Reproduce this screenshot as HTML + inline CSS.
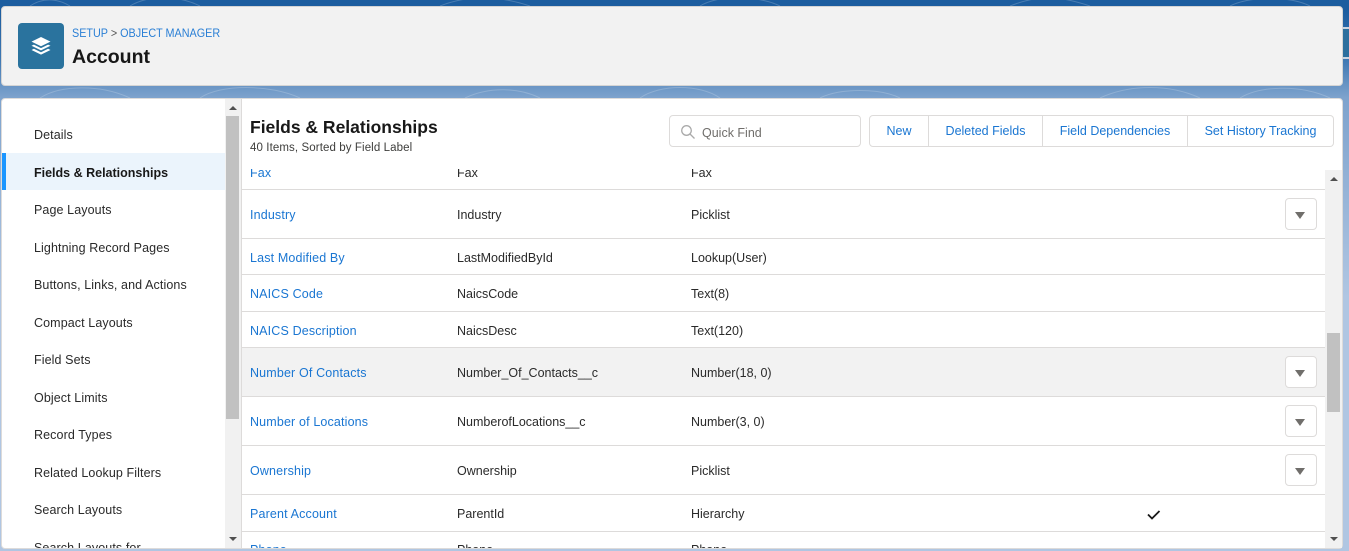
<!DOCTYPE html>
<html><head><meta charset="utf-8">
<style>
html,body{margin:0;padding:0;width:1349px;height:551px;overflow:hidden;background:#b0c6e2;font-family:"Liberation Sans",sans-serif;font-size:12.5px;color:#2a2a2a}
*{box-sizing:border-box}
.a{position:absolute}
.t{position:absolute;white-space:nowrap;line-height:16px;height:16px}
.s .t{margin-top:1px}
.l{color:#1a76d2;letter-spacing:.15px}
.m .t{letter-spacing:.1px}
.hl{position:absolute;left:242px;width:1083px;height:1px;background:#dddbda}
.dd{position:absolute;left:1285px;width:32px;height:32px;background:#fff;border:1px solid #dddbda;border-radius:4px}
.dd:after{content:"";position:absolute;left:9px;top:13px;border-left:5.5px solid transparent;border-right:5.5px solid transparent;border-top:7px solid #706e6b}
.btn{position:absolute;top:115px;height:32px;background:#fff;border:1px solid #dddbda;border-left:none;color:#1a76d2;text-align:center;line-height:31px;white-space:nowrap}
.up,.dn{position:absolute;width:0;height:0;border-left:4px solid transparent;border-right:4px solid transparent}
.up{border-bottom:4px solid #505050}.dn{border-top:4px solid #505050}
</style></head><body>
<div class="a" style="left:0;top:0;width:1349px;height:98px;background:linear-gradient(#1c5d9f 0,#1c5d9f 10px,#3f78b3 60px,#7ea3cd 98px)"></div>
<div class="a" style="left:0;top:98px;width:1349px;height:453px;background:linear-gradient(#7ea3cd,#b0c6e2 200px)"></div>
<svg class="a" style="left:0;top:0" width="1349" height="98" fill="none" stroke="#fff" stroke-opacity=".2">
<path d="M30 6C45-4 60 0 70 6M130 6C150-6 180-4 200 6M440 6C470-6 500-4 530 6M700 6C720-6 760-4 780 6M1010 6C1040-6 1060-4 1090 6M1230 6C1250-4 1290-4 1310 6"/>
<path d="M40 98C60 85 100 84 130 98M200 98C220 84 270 84 300 98M465 98C490 86 520 88 540 98M640 98C660 84 700 84 720 98M820 98C840 88 880 88 900 98M1100 98C1130 84 1170 84 1200 98M1240 98C1260 86 1300 84 1330 98"/>
</svg>
<div class="a" style="left:1338px;top:27px;width:11px;height:32px;background:#2c6f9e;border:2px solid #c9d5e2;border-right:none;border-radius:4px 0 0 4px"></div>
<div class="a" style="left:1px;top:6px;width:1342px;height:80px;background:#f2f2f2;border:1px solid #d4d4d4;border-radius:4px"></div>
<div class="a" style="left:18px;top:23px;width:46px;height:46px;background:#2a739e;border-radius:4px"></div>
<svg class="a" style="left:30px;top:36px" width="22" height="20" viewBox="0 0 22 20" fill="#fff"><path d="M11 1L20.5 5.6 11 10.2 1.5 5.6z"/><path d="M1.5 9.8l2.4-1.2 7.1 3.5 7.1-3.5 2.4 1.2L11 14.4z"/><path d="M1.5 14l2.4-1.2 7.1 3.5 7.1-3.5 2.4 1.2L11 18.6z"/></svg>
<div class="t" style="left:72px;top:25px;font-size:12px;transform:scaleX(.9);transform-origin:0 0;color:#2a7fd5">SETUP <span style="color:#555">&gt;</span> OBJECT MANAGER</div>
<div class="t" style="left:72px;top:46px;font-size:19.5px;font-weight:bold;line-height:22px;height:22px;color:#181818">Account</div>

<div class="a" style="left:1px;top:98px;width:1342px;height:451px;background:#fff;border:1px solid #dddbda;border-radius:4px"></div>

<div class="a" style="left:2px;top:153px;width:223px;height:37px;background:#ebf4fc"></div>
<div class="a" style="left:2px;top:153px;width:4px;height:37px;background:#1b96ff"></div>
<div class="a s m" style="left:0;top:99px;width:225px;height:449px;overflow:hidden">
<div class="t" style="left:34px;top:27px">Details</div>
<div class="t" style="left:34px;top:65px;font-weight:bold;letter-spacing:0;color:#181818">Fields &amp; Relationships</div>
<div class="t" style="left:34px;top:102px">Page Layouts</div>
<div class="t" style="left:34px;top:140px">Lightning Record Pages</div>
<div class="t" style="left:34px;top:177px">Buttons, Links, and Actions</div>
<div class="t" style="left:34px;top:215px">Compact Layouts</div>
<div class="t" style="left:34px;top:252px">Field Sets</div>
<div class="t" style="left:34px;top:290px">Object Limits</div>
<div class="t" style="left:34px;top:327px">Record Types</div>
<div class="t" style="left:34px;top:365px">Related Lookup Filters</div>
<div class="t" style="left:34px;top:402px">Search Layouts</div>
<div class="t" style="left:34px;top:440px">Search Layouts for</div>
</div>
<div class="a" style="left:225px;top:99px;width:16px;height:449px;background:#f1f1f1"></div>
<div class="a" style="left:226px;top:116px;width:13px;height:303px;background:#c1c1c1"></div>
<div class="up" style="left:229px;top:106px"></div>
<div class="dn" style="left:229px;top:537px"></div>
<div class="a" style="left:241px;top:99px;width:1px;height:449px;background:#dddbda"></div>

<div class="t" style="left:250px;top:116px;font-size:17.5px;font-weight:bold;line-height:22px;height:22px;color:#181818">Fields &amp; Relationships</div>
<div class="t" style="left:250px;top:140px;font-size:11.5px;letter-spacing:.1px;color:#3e3e3c">40 Items, Sorted by Field Label</div>

<div class="a" style="left:669px;top:115px;width:192px;height:32px;border:1px solid #dddbda;border-radius:4px;background:#fff"></div>
<svg class="a" style="left:680px;top:124px" width="16" height="16" fill="none" stroke="#aaa" stroke-width="1.3"><circle cx="6.5" cy="6.5" r="4.8"/><path d="M10 10l4.5 4.5"/></svg>
<div class="t" style="left:702px;top:125px;color:#706e6b">Quick Find</div>
<div class="btn" style="left:869px;width:60px;border-left:1px solid #dddbda;border-radius:4px 0 0 4px">New</div>
<div class="btn" style="left:929px;width:114px">Deleted Fields</div>
<div class="btn" style="left:1043px;width:145px">Field Dependencies</div>
<div class="btn" style="left:1188px;width:146px;border-radius:0 4px 4px 0">Set History Tracking</div>

<div class="a" style="left:242px;top:348px;width:1083px;height:48px;background:#f2f2f2"></div>
<div class="a s" style="left:242px;top:169px;width:1083px;height:379px;overflow:hidden">
<div style="position:absolute;left:0;top:1px;width:1083px;height:378px">
<div class="t l" style="left:8px;top:-6px">Fax</div><div class="t" style="left:215px;top:-6px">Fax</div><div class="t" style="left:449px;top:-6px">Fax</div>
<div class="t l" style="left:8px;top:36px">Industry</div><div class="t" style="left:215px;top:36px">Industry</div><div class="t" style="left:449px;top:36px">Picklist</div>
<div class="t l" style="left:8px;top:79px">Last Modified By</div><div class="t" style="left:215px;top:79px">LastModifiedById</div><div class="t" style="left:449px;top:79px">Lookup(User)</div>
<div class="t l" style="left:8px;top:115px">NAICS Code</div><div class="t" style="left:215px;top:115px">NaicsCode</div><div class="t" style="left:449px;top:115px">Text(8)</div>
<div class="t l" style="left:8px;top:152px">NAICS Description</div><div class="t" style="left:215px;top:152px">NaicsDesc</div><div class="t" style="left:449px;top:152px">Text(120)</div>
<div class="t l" style="left:8px;top:194px">Number Of Contacts</div><div class="t" style="left:215px;top:194px">Number_Of_Contacts__c</div><div class="t" style="left:449px;top:194px">Number(18, 0)</div>
<div class="t l" style="left:8px;top:243px">Number of Locations</div><div class="t" style="left:215px;top:243px">NumberofLocations__c</div><div class="t" style="left:449px;top:243px">Number(3, 0)</div>
<div class="t l" style="left:8px;top:292px">Ownership</div><div class="t" style="left:215px;top:292px">Ownership</div><div class="t" style="left:449px;top:292px">Picklist</div>
<div class="t l" style="left:8px;top:335px">Parent Account</div><div class="t" style="left:215px;top:335px">ParentId</div><div class="t" style="left:449px;top:335px">Hierarchy</div>
<div class="t l" style="left:8px;top:371px">Phone</div><div class="t" style="left:215px;top:371px">Phone</div><div class="t" style="left:449px;top:371px">Phone</div>
</div>
</div>
<div class="hl" style="top:189px"></div><div class="hl" style="top:238px"></div><div class="hl" style="top:274px"></div><div class="hl" style="top:311px"></div><div class="hl" style="top:347px"></div><div class="hl" style="top:396px"></div><div class="hl" style="top:445px"></div><div class="hl" style="top:494px"></div><div class="hl" style="top:531px"></div>
<div class="dd" style="top:198px"></div><div class="dd" style="top:356px"></div><div class="dd" style="top:405px"></div><div class="dd" style="top:454px"></div>
<svg class="a" style="left:1146px;top:508px" width="16" height="14" fill="none" stroke="#181818" stroke-width="1.8"><path d="M2 6.5l4 4 7.5-7.5"/></svg>

<div class="a" style="left:1325px;top:170px;width:17px;height:378px;background:#f1f1f1"></div>
<div class="a" style="left:1327px;top:333px;width:13px;height:79px;background:#c1c1c1"></div>
<div class="up" style="left:1330px;top:177px"></div>
<div class="dn" style="left:1330px;top:537px"></div>
</body></html>
